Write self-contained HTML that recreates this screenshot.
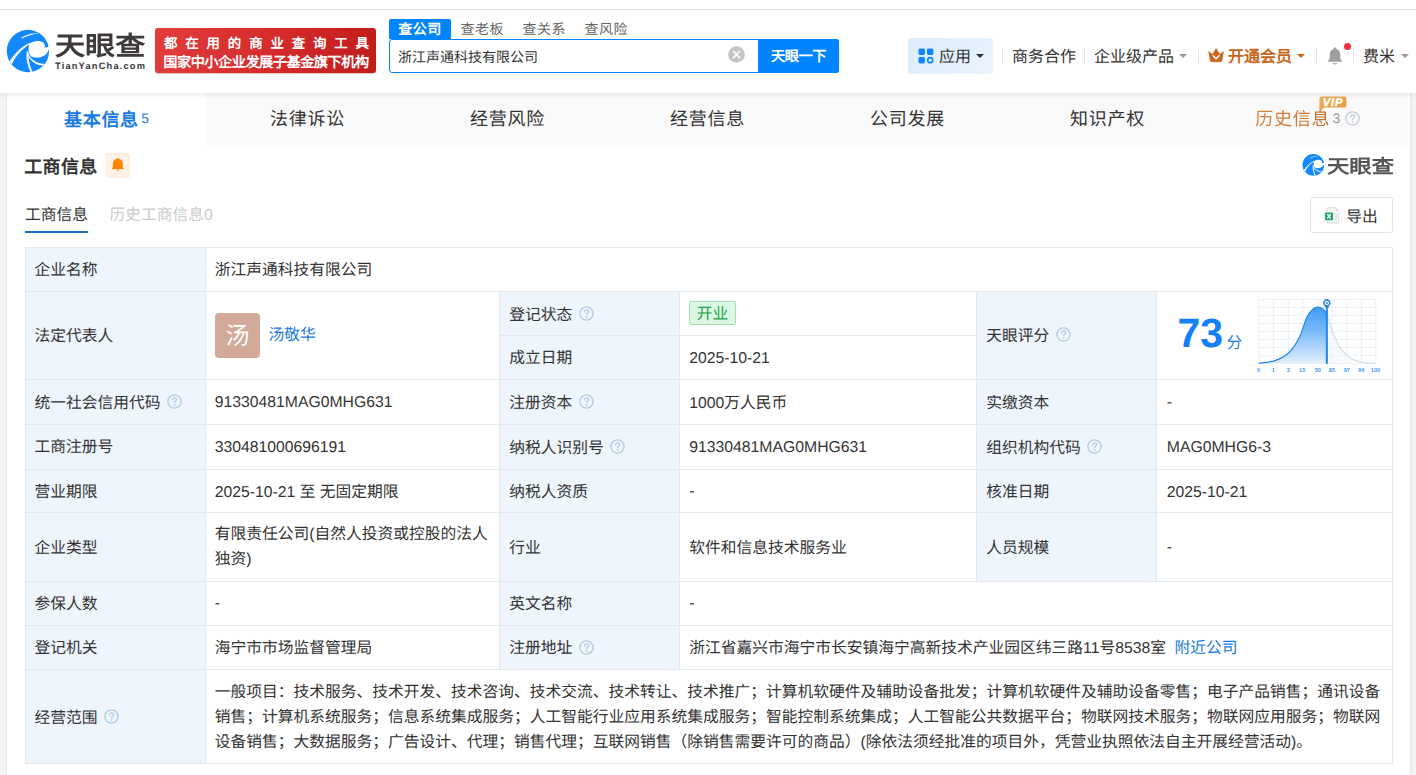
<!DOCTYPE html>
<html lang="zh-CN">
<head>
<meta charset="utf-8">
<title>天眼查</title>
<style>
html,body{margin:0;padding:0}
body{width:1416px;height:775px;overflow:hidden;background:#f4f4f4;font-family:"Liberation Sans",sans-serif;color:#333;position:relative;text-rendering:geometricPrecision}
div,span,a{box-sizing:border-box}
.a{position:absolute;white-space:nowrap}
/* header */
#hdr{left:0;top:0;width:1416px;height:93px;background:#fff;box-shadow:0 2px 5px rgba(0,0,0,.08);z-index:5}
#topline{left:0;top:9px;width:1416px;height:1px;background:#e2e2e2}
#logotxt{left:54.5px;top:28.5px;font-size:26.3px;font-weight:bold;line-height:34px;color:#3d3a39;transform:scaleX(1.145);transform-origin:0 0}
#logosub{left:55px;top:60px;font-size:9.3px;font-weight:bold;line-height:12px;color:#3d3a39;letter-spacing:1.17px}
#banner{left:155px;top:28px;width:221px;height:45px;border-radius:3px;background:linear-gradient(100deg,#e23d3d 0%,#d42a2a 55%,#c01c1c 100%);box-shadow:0 1px 1px rgba(120,0,0,.25)}
#ban1{left:9px;top:6.6px;font-size:13.4px;font-weight:bold;color:#fff;line-height:18px;letter-spacing:7.9px}
#ban2{left:8.3px;top:25.6px;font-size:14.2px;font-weight:bold;color:#fff;line-height:18px;letter-spacing:-0.5px}
.stab{top:19px;height:20px;line-height:21.5px;font-size:14px;color:#666;letter-spacing:0.5px}
#stab1{left:389px;width:62px;background:#0084ff;color:#fff;font-weight:bold;text-align:center;border-radius:2px 2px 0 0}
#sbox{left:389px;top:39px;width:450px;height:34px;border:1px solid #0084ff;border-radius:3px;background:#fff}
#stext{left:398px;top:46.5px;font-size:14px;line-height:20px;color:#333}
#sclear{left:728px;top:46px;width:17px;height:17px}
#sbtn{left:758px;top:39px;width:81px;height:34px;background:#0084ff;border-radius:0 3px 3px 0;color:#fff;font-size:14.2px;font-weight:bold;line-height:36px;text-align:center;letter-spacing:-0.4px}
.nav{top:46px;height:24px;line-height:24px;font-size:16px;color:#333}
.sep{top:49px;width:1px;height:14px;background:#e3e3e3}
.caret{top:54px;width:0;height:0;border-left:4px solid transparent;border-right:4px solid transparent;border-top:4.5px solid #999}
#appbox{left:908px;top:38px;width:85px;height:36px;border-radius:3px;background:linear-gradient(135deg,#dcebfb 0%,#e4f0fc 60%,#eef5fd 100%)}
/* content */
#content{left:6px;top:93px;width:1406px;height:690px;background:#fff;border-left:1px solid #ebebeb;border-right:2px solid #ececec}
#tabbar{left:206px;top:93px;width:1202px;height:53px;background:#f9f9f9}
.tab{top:105.4px;height:28px;line-height:28px;font-size:18px;color:#333;width:200px;text-align:center;letter-spacing:0.7px}

/* section */
#sec{left:24.3px;top:152.5px;font-size:18px;font-weight:bold;line-height:28px;color:#333;letter-spacing:0.3px}
#bellbox{left:106px;top:153px;width:23.6px;height:24.6px;border-radius:3px;background:#fff1e5;border:1px solid #fde9d8}
#wm{left:1326.8px;top:153.8px;font-size:19px;font-weight:bold;line-height:28px;color:#555;transform:scaleX(1.175);transform-origin:0 0}
.sub{top:203.8px;font-size:15.75px;line-height:24.8px}
#subline{left:25px;top:231px;width:63px;height:2px;background:#1f6fc6}
#exp{left:1310px;top:197px;width:83px;height:36px;border:1px solid #e2e3e8;border-radius:2.5px;background:#fff}
#exptxt{left:1346.2px;top:205.8px;font-size:15.75px;line-height:24.8px;color:#333}
/* table */
.lbg{background:#eef5fd}
.hl{height:1px;background:#e4e9ee;left:25px;width:1368px}
.vl{width:1px;background:#e4e9ee}
.c{font-size:15.76px;line-height:25.1px;color:#333;margin-top:2.3px}
.c0{left:34.6px}.c1{left:214.7px}.c2{left:509.2px}.c3{left:689.3px}.c4{left:986.3px}.c5{left:1166.8px}
.blue{color:#1b7ae0}
.q{width:15px;height:15px}
</style>
</head>
<body>
<div id="content" class="a"></div>
<div id="tabbar" class="a"></div>

<!-- header -->
<div id="hdr" class="a">
  <div id="topline" class="a"></div>
  <svg class="a" style="left:2px;top:26px" width="52" height="50" viewBox="0 0 806 775">
    <circle cx="402" cy="388" r="328" fill="#1489ff"/>
    <path d="M298 184 C360 138 470 108 580 112 C480 126 380 152 312 192 Z" fill="#fff"/>
    <path d="M425 275 C500 222 600 222 645 263 C668 288 668 315 657 336 L745 318 L745 384 L722 372 C705 440 620 495 540 490 C500 487 470 480 448 468 C425 440 405 400 412 350 C415 320 420 295 425 275 Z" fill="#fff"/>
    <path d="M434 260 C330 298 200 418 116 548 L150 592 C212 462 316 348 430 282 Z" fill="#fff"/>
    <path d="M384 392 C368 500 398 620 443 712 L470 704 C426 612 402 500 410 400 Z" fill="#fff"/>
    <path d="M408 425 C430 500 520 578 650 586 L640 613 C530 606 430 540 398 440 Z" fill="#fff"/>
  </svg>
  <div id="logotxt" class="a">天眼查</div>
  <div id="logosub" class="a">TianYanCha.com</div>
  <div id="banner" class="a">
    <div id="ban1" class="a">都在用的商业查询工具</div>
    <div id="ban2" class="a">国家中小企业发展子基金旗下机构</div>
  </div>

  <div id="stab1" class="a stab">查公司</div>
  <div class="a stab" style="left:460.5px">查老板</div>
  <div class="a stab" style="left:522.5px">查关系</div>
  <div class="a stab" style="left:584.5px">查风险</div>
  <div id="sbox" class="a"></div>
  <div id="stext" class="a">浙江声通科技有限公司</div>
  <svg id="sclear" class="a" viewBox="0 0 17 17"><circle cx="8.5" cy="8.5" r="8.3" fill="#c4c4c4"/><path d="M5.4 5.4 L11.6 11.6 M11.6 5.4 L5.4 11.6" stroke="#fff" stroke-width="1.5" stroke-linecap="round"/></svg>
  <div id="sbtn" class="a">天眼一下</div>

  <div id="appbox" class="a"></div>
  <svg class="a" style="left:918px;top:48px" width="16" height="16" viewBox="0 0 16 16">
    <rect x="0.5" y="0.5" width="6.4" height="6.4" rx="1.4" fill="#0f86ff"/>
    <rect x="9" y="0.5" width="6.4" height="6.4" rx="1.4" fill="#0f86ff"/>
    <rect x="0.5" y="9" width="6.4" height="6.4" rx="1.4" fill="#0f86ff"/>
    <circle cx="12.2" cy="12.2" r="2.5" fill="none" stroke="#0f86ff" stroke-width="1.7"/>
  </svg>
  <div class="a nav" style="left:939px">应用</div>
  <div class="a caret" style="left:976px;border-top-color:#333"></div>
  <div class="a sep" style="left:1002px"></div>
  <div class="a nav" style="left:1012px">商务合作</div>
  <div class="a sep" style="left:1084px"></div>
  <div class="a nav" style="left:1094px">企业级产品</div>
  <div class="a caret" style="left:1179px"></div>
  <div class="a sep" style="left:1198px"></div>
  <svg class="a" style="left:1207px;top:47px" width="17" height="17" viewBox="0 0 17 17">
    <path d="M1.7 4.5 L5.5 7.5 L9.1 1.4 L12.7 7.5 L16.5 4.5 L14.9 13.6 Q14.7 14.8 13.5 14.8 L4.7 14.8 Q3.5 14.8 3.3 13.6 Z" fill="#c9661c" stroke="#c9661c" stroke-width="0.6" stroke-linejoin="round"/>
    <path d="M6.2 8.8 L9.1 11.7 L12 8.8" fill="none" stroke="#fff" stroke-width="1.6" stroke-linecap="round" stroke-linejoin="round"/>
  </svg>
  <div class="a nav" style="left:1228px;font-weight:bold;color:#c9661c">开通会员</div>
  <div class="a caret" style="left:1297px;border-top-color:#c9661c"></div>
  <div class="a sep" style="left:1316px"></div>
  <svg class="a" style="left:1326px;top:46px" width="18" height="20" viewBox="0 0 18 20">
    <path d="M9 1.6 C9.9 1.6 10.4 2.2 10.4 3 C13 3.7 14.2 6 14.2 8.6 L14.2 12.6 L16 15 L16 15.8 L2 15.8 L2 15 L3.8 12.6 L3.8 8.6 C3.8 6 5 3.7 7.6 3 C7.6 2.2 8.1 1.6 9 1.6 Z" fill="#a0a0a0"/>
    <path d="M6.6 17.2 L11.4 17.2 L11.4 17.8 Q9 19.4 6.6 17.8 Z" fill="#a0a0a0"/>
  </svg>
  <div class="a" style="left:1344px;top:42.5px;width:7px;height:7px;border-radius:50%;background:#f5323c"></div>
  <div class="a sep" style="left:1353px"></div>
  <div class="a nav" style="left:1363px">费米</div>
  <div class="a caret" style="left:1401px"></div>
</div>

<!-- tabs -->
<div class="a tab" style="left:64px;top:106.2px;width:auto;text-align:left;font-weight:bold;color:#1b7ae0">基本信息</div>
<div class="a" style="left:141.3px;top:108.6px;font-size:13.8px;line-height:20px;color:#1b7ae0">5</div>
<div class="a tab" style="left:207.5px">法律诉讼</div>
<div class="a tab" style="left:407.5px">经营风险</div>
<div class="a tab" style="left:607.5px">经营信息</div>
<div class="a tab" style="left:807.5px">公司发展</div>
<div class="a tab" style="left:1007.5px">知识产权</div>
<div class="a tab" style="left:1255.3px;width:auto;text-align:left;color:#cc7832;background:linear-gradient(90deg,#d9863a,#c26a28);-webkit-background-clip:text;background-clip:text;-webkit-text-fill-color:transparent">历史信息</div>
<div class="a" style="left:1332.5px;top:107.8px;font-size:14px;line-height:20px;color:#999">3</div>
<svg class="a" style="left:1345px;top:111.1px" width="15" height="15" viewBox="0 0 15 15"><circle cx="7.5" cy="7.5" r="6.6" fill="none" stroke="#c3ccd4" stroke-width="1.3"/><path d="M5.5 6 C5.5 4.6 6.4 3.9 7.6 3.9 C8.8 3.9 9.6 4.6 9.6 5.6 C9.6 6.9 7.6 7 7.6 8.7" fill="none" stroke="#c3ccd4" stroke-width="1.2" stroke-linecap="round"/><circle cx="7.6" cy="10.9" r="0.85" fill="#c3ccd4"/></svg>
<svg class="a" style="left:1319px;top:96px" width="28" height="17" viewBox="0 0 28 17">
  <defs><linearGradient id="vg" x1="0" y1="0" x2="1" y2="1"><stop offset="0" stop-color="#f0b35e"/><stop offset="1" stop-color="#e0943a"/></linearGradient></defs>
  <path d="M2.6 0.4 L25.4 0.4 Q27.4 0.4 27.4 2.4 L27.4 9.4 Q27.4 11.4 25.4 11.4 L5.2 11.4 L0.4 16 L0.4 2.6 Q0.4 0.4 2.6 0.4 Z" fill="url(#vg)"/>
  <text x="14" y="9.7" font-family="Liberation Sans, sans-serif" font-size="11" font-weight="bold" font-style="italic" fill="#fff" stroke="#fff" stroke-width="0.45" text-anchor="middle" letter-spacing="0.9">VIP</text>
</svg>


<!-- section -->
<div id="sec" class="a">工商信息</div>
<div id="bellbox" class="a"></div>
<svg class="a" style="left:111px;top:157px" width="14" height="15" viewBox="0 0 14 15">
  <path d="M6.8 0.9 C7.3 0.9 7.7 1.2 7.8 1.7 C10.3 2.3 11.8 4.3 11.8 7 L11.8 10.6 L12.7 11 L12.7 12 L0.9 12 L0.9 11 L1.8 10.6 L1.8 7 C1.8 4.3 3.3 2.3 5.8 1.7 C5.9 1.2 6.3 0.9 6.8 0.9 Z" fill="#ff8503"/>
  <path d="M5 12.4 L8.6 12.4 Q6.8 14.9 5 12.4 Z" fill="#ff8503"/>
</svg>
<svg class="a" style="left:1300.3px;top:152.4px" width="26.78" height="25.75" viewBox="0 0 806 775">
  <circle cx="402" cy="388" r="328" fill="#1489ff"/>
    <path d="M298 184 C360 138 470 108 580 112 C480 126 380 152 312 192 Z" fill="#fff"/>
    <path d="M425 275 C500 222 600 222 645 263 C668 288 668 315 657 336 L745 318 L745 384 L722 372 C705 440 620 495 540 490 C500 487 470 480 448 468 C425 440 405 400 412 350 C415 320 420 295 425 275 Z" fill="#fff"/>
    <path d="M434 260 C330 298 200 418 116 548 L150 592 C212 462 316 348 430 282 Z" fill="#fff"/>
    <path d="M384 392 C368 500 398 620 443 712 L470 704 C426 612 402 500 410 400 Z" fill="#fff"/>
    <path d="M408 425 C430 500 520 578 650 586 L640 613 C530 606 430 540 398 440 Z" fill="#fff"/>
</svg>
<div id="wm" class="a">天眼查</div>
<div class="a sub" style="left:25px;color:#333">工商信息</div>
<div id="subline" class="a"></div>
<div class="a sub" style="left:109.5px;color:#ccc">历史工商信息0</div>
<div id="exp" class="a"></div>
<svg class="a" style="left:1324px;top:206.5px" width="16" height="17" viewBox="0 0 16 17">
  <path d="M3.6 0.8 L11.4 0.8 L14.8 4.2 L14.8 15.4 Q14.8 16 14.2 16 L3.6 16 Q3 16 3 15.4 L3 1.4 Q3 0.8 3.6 0.8 Z" fill="#f7f7f8" stroke="#d4d5da" stroke-width="0.9"/>
  <path d="M11.4 0.8 L11.4 4.2 L14.8 4.2 Z" fill="#dcdde1"/>
  <path d="M10.6 7.6 H13 M10.6 9.7 H13 M10.6 11.8 H13" stroke="#d2d3d8" stroke-width="1"/>
  <rect x="0.9" y="5.4" width="8.2" height="7.8" rx="0.8" fill="#2aa869"/>
  <path d="M3.3 7.2 L6.7 11.4 M6.7 7.2 L3.3 11.4" stroke="#fff" stroke-width="1.3"/>
</svg>
<div id="exptxt" class="a">导出</div>

<!-- table -->
<div class="a lbg" style="left:25px;top:247px;width:180px;height:516px"></div>
<div class="a lbg" style="left:499px;top:291px;width:180px;height:378px"></div>
<div class="a lbg" style="left:976px;top:291px;width:180px;height:290px"></div>
<div class="a hl" style="top:247px"></div>
<div class="a hl" style="top:291px"></div>
<div class="a hl" style="top:379px"></div>
<div class="a hl" style="top:424px"></div>
<div class="a hl" style="top:469px"></div>
<div class="a hl" style="top:512px"></div>
<div class="a hl" style="top:581px"></div>
<div class="a hl" style="top:625px"></div>
<div class="a hl" style="top:669px"></div>
<div class="a hl" style="top:763px"></div>
<div class="a hl" style="top:335px;left:499px;width:478px"></div>
<div class="a vl" style="left:25px;top:247px;height:517px"></div>
<div class="a vl" style="left:205px;top:247px;height:517px"></div>
<div class="a vl" style="left:1392px;top:247px;height:517px"></div>
<div class="a vl" style="left:499px;top:291px;height:379px"></div>
<div class="a vl" style="left:679px;top:291px;height:379px"></div>
<div class="a vl" style="left:976px;top:291px;height:291px"></div>
<div class="a vl" style="left:1156px;top:291px;height:291px"></div>
<div class="a c c0" style="top:256.1px">企业名称</div>
<div class="a c c1" style="top:256.1px">浙江声通科技有限公司</div>
<div class="a c c0" style="top:322.2px">法定代表人</div>
<div class="a" style="left:215px;top:313px;width:45px;height:45px;border-radius:4px;background:#d3a999;color:#fff;font-size:24px;line-height:47px;text-align:center">汤</div>
<div class="a c blue" style="left:268.5px;top:321.2px">汤敬华</div>
<div class="a c c2" style="top:300.8px">登记状态</div>
<svg class="a q" style="left:578.5px;top:305.9px" viewBox="0 0 15 15"><circle cx="7.5" cy="7.5" r="6.6" fill="none" stroke="#b4cbe3" stroke-width="1.4"/><path d="M5.5 6 C5.5 4.6 6.4 3.9 7.6 3.9 C8.8 3.9 9.6 4.6 9.6 5.6 C9.6 6.9 7.6 7 7.6 8.7" fill="none" stroke="#b4cbe3" stroke-width="1.3" stroke-linecap="round"/><circle cx="7.6" cy="10.9" r="0.85" fill="#b4cbe3"/></svg>
<div class="a" style="left:689px;top:301px;width:47px;height:23.5px;border-radius:2px;background:#dbf7e3;border:1px solid #a3e0b5;color:#1fa24b;font-size:15.75px;line-height:25px;text-align:center">开业</div>
<div class="a c c2" style="top:343.3px">成立日期</div>
<div class="a c c3" style="top:343.3px">2025-10-21</div>
<div class="a c c4" style="top:322.2px">天眼评分</div>
<svg class="a q" style="left:1055.5px;top:327.1px" viewBox="0 0 15 15"><circle cx="7.5" cy="7.5" r="6.6" fill="none" stroke="#b4cbe3" stroke-width="1.4"/><path d="M5.5 6 C5.5 4.6 6.4 3.9 7.6 3.9 C8.8 3.9 9.6 4.6 9.6 5.6 C9.6 6.9 7.6 7 7.6 8.7" fill="none" stroke="#b4cbe3" stroke-width="1.3" stroke-linecap="round"/><circle cx="7.6" cy="10.9" r="0.85" fill="#b4cbe3"/></svg>
<div class="a" style="left:1177.6px;top:309.2px;font-size:41px;font-weight:bold;line-height:48px;color:#1380f5;letter-spacing:-0.2px">73</div>
<div class="a c blue" style="left:1226.4px;top:328.9px">分</div>
<svg class="a" style="left:1250px;top:292px" width="140" height="88" viewBox="0 0 1233 775">
  <defs>
    <linearGradient id="bg1" x1="0" y1="133" x2="0" y2="630" gradientUnits="userSpaceOnUse"><stop offset="0" stop-color="#3d9bf7"/><stop offset="0.45" stop-color="#7dbcfa"/><stop offset="1" stop-color="#e4f0fc"/></linearGradient>
  </defs>
  <path d="M78 65V630M207 65V630M337 65V630M465 65V630M597 65V630M725 65V630M853 65V630M982 65V630M1108 65V630M78 65H1108M78 135H1108M78 207H1108M78 277H1108M78 348H1108M78 418H1108M78 489H1108M78 560H1108M78 630H1108" fill="none" stroke="#e7eef8" stroke-width="8"/>
  <path d="M677 197 C690 230 705 290 725 345 C750 410 780 470 800 500 C830 540 880 585 920 600 C960 614 1040 628 1108 630 L677 630 Z" fill="#f3f5f8" fill-opacity="0.6"/>
  <path d="M677 197 C690 230 705 290 725 345 C750 410 780 470 800 500 C830 540 880 585 920 600 C960 614 1040 628 1108 630" fill="none" stroke="#ccd6e0" stroke-width="9"/>
  <path d="M78 628 C140 622 170 616 207 608 C260 594 300 572 337 540 C370 510 410 450 440 390 C460 345 480 270 500 225 C520 185 550 135 597 133 C630 133 660 160 677 197 L677 630 L78 630 Z" fill="url(#bg1)"/>
  <path d="M78 628 C140 622 170 616 207 608 C260 594 300 572 337 540 C370 510 410 450 440 390 C460 345 480 270 500 225 C520 185 550 135 597 133 C630 133 660 160 677 197" fill="none" stroke="#2587ee" stroke-width="11"/>
  <path d="M677 150V632" stroke="#2587ee" stroke-width="18"/>
  <path d="M677 160 L653 117 A32 32 0 1 1 701 117 Z" fill="#2587ee"/>
  <circle cx="677" cy="97" r="19" fill="#fff"/>
  <circle cx="677" cy="97" r="9" fill="#2587ee"/>
  <g font-family="Liberation Sans, sans-serif" font-size="50" font-weight="bold" fill="#4a9ceb" text-anchor="middle"><text x="75" y="702">0</text><text x="205" y="702">1</text><text x="337" y="702">3</text><text x="460" y="702">15</text><text x="597" y="702">50</text><text x="722" y="702">85</text><text x="853" y="702">97</text><text x="980" y="702">99</text><text x="1105" y="702">100</text></g>
</svg>
<div class="a c c0" style="top:388.9px">统一社会信用代码</div>
<svg class="a q" style="left:167.1px;top:393.9px" viewBox="0 0 15 15"><circle cx="7.5" cy="7.5" r="6.6" fill="none" stroke="#b4cbe3" stroke-width="1.4"/><path d="M5.5 6 C5.5 4.6 6.4 3.9 7.6 3.9 C8.8 3.9 9.6 4.6 9.6 5.6 C9.6 6.9 7.6 7 7.6 8.7" fill="none" stroke="#b4cbe3" stroke-width="1.3" stroke-linecap="round"/><circle cx="7.6" cy="10.9" r="0.85" fill="#b4cbe3"/></svg>
<div class="a c c1" style="top:388.1px">91330481MAG0MHG631</div>
<div class="a c c2" style="top:388.9px">注册资本</div>
<svg class="a q" style="left:578.5px;top:393.9px" viewBox="0 0 15 15"><circle cx="7.5" cy="7.5" r="6.6" fill="none" stroke="#b4cbe3" stroke-width="1.4"/><path d="M5.5 6 C5.5 4.6 6.4 3.9 7.6 3.9 C8.8 3.9 9.6 4.6 9.6 5.6 C9.6 6.9 7.6 7 7.6 8.7" fill="none" stroke="#b4cbe3" stroke-width="1.3" stroke-linecap="round"/><circle cx="7.6" cy="10.9" r="0.85" fill="#b4cbe3"/></svg>
<div class="a c c3" style="top:388.9px">1000万人民币</div>
<div class="a c c4" style="top:388.9px">实缴资本</div>
<div class="a c c5" style="top:388px">-</div>
<div class="a c c0" style="top:433.1px">工商注册号</div>
<div class="a c c1" style="top:432.6px">330481000696191</div>
<div class="a c c2" style="top:433.6px">纳税人识别号</div>
<svg class="a q" style="left:610.2px;top:438.7px" viewBox="0 0 15 15"><circle cx="7.5" cy="7.5" r="6.6" fill="none" stroke="#b4cbe3" stroke-width="1.4"/><path d="M5.5 6 C5.5 4.6 6.4 3.9 7.6 3.9 C8.8 3.9 9.6 4.6 9.6 5.6 C9.6 6.9 7.6 7 7.6 8.7" fill="none" stroke="#b4cbe3" stroke-width="1.3" stroke-linecap="round"/><circle cx="7.6" cy="10.9" r="0.85" fill="#b4cbe3"/></svg>
<div class="a c c3" style="top:432.6px">91330481MAG0MHG631</div>
<div class="a c c4" style="top:433.6px">组织机构代码</div>
<svg class="a q" style="left:1087.0px;top:438.7px" viewBox="0 0 15 15"><circle cx="7.5" cy="7.5" r="6.6" fill="none" stroke="#b4cbe3" stroke-width="1.4"/><path d="M5.5 6 C5.5 4.6 6.4 3.9 7.6 3.9 C8.8 3.9 9.6 4.6 9.6 5.6 C9.6 6.9 7.6 7 7.6 8.7" fill="none" stroke="#b4cbe3" stroke-width="1.3" stroke-linecap="round"/><circle cx="7.6" cy="10.9" r="0.85" fill="#b4cbe3"/></svg>
<div class="a c c5" style="top:432.6px">MAG0MHG6-3</div>
<div class="a c c0" style="top:477.8px">营业期限</div>
<div class="a c c1" style="top:477.8px">2025-10-21 至 无固定期限</div>
<div class="a c c2" style="top:477.8px">纳税人资质</div>
<div class="a c c3" style="top:477px">-</div>
<div class="a c c4" style="top:477.8px">核准日期</div>
<div class="a c c5" style="top:477.8px">2025-10-21</div>
<div class="a c c0" style="top:533.9px">企业类型</div>
<div class="a c c1" style="top:519.9px">有限责任公司(自然人投资或控股的法人<br>独资)</div>
<div class="a c c2" style="top:533.9px">行业</div>
<div class="a c c3" style="top:533.9px">软件和信息技术服务业</div>
<div class="a c c4" style="top:533.9px">人员规模</div>
<div class="a c c5" style="top:533px">-</div>
<div class="a c c0" style="top:590px">参保人数</div>
<div class="a c c1" style="top:589px">-</div>
<div class="a c c2" style="top:590px">英文名称</div>
<div class="a c c3" style="top:589px">-</div>
<div class="a c c0" style="top:634px">登记机关</div>
<div class="a c c1" style="top:634px">海宁市市场监督管理局</div>
<div class="a c c2" style="top:634px">注册地址</div>
<svg class="a q" style="left:578.5px;top:639.7px" viewBox="0 0 15 15"><circle cx="7.5" cy="7.5" r="6.6" fill="none" stroke="#b4cbe3" stroke-width="1.4"/><path d="M5.5 6 C5.5 4.6 6.4 3.9 7.6 3.9 C8.8 3.9 9.6 4.6 9.6 5.6 C9.6 6.9 7.6 7 7.6 8.7" fill="none" stroke="#b4cbe3" stroke-width="1.3" stroke-linecap="round"/><circle cx="7.6" cy="10.9" r="0.85" fill="#b4cbe3"/></svg>
<div class="a c c3" style="top:634px">浙江省嘉兴市海宁市长安镇海宁高新技术产业园区纬三路11号8538室<span class="blue" style="margin-left:8.5px">附近公司</span></div>
<div class="a c c0" style="top:703.6px">经营范围</div>
<svg class="a q" style="left:104.0px;top:708.7px" viewBox="0 0 15 15"><circle cx="7.5" cy="7.5" r="6.6" fill="none" stroke="#b4cbe3" stroke-width="1.4"/><path d="M5.5 6 C5.5 4.6 6.4 3.9 7.6 3.9 C8.8 3.9 9.6 4.6 9.6 5.6 C9.6 6.9 7.6 7 7.6 8.7" fill="none" stroke="#b4cbe3" stroke-width="1.3" stroke-linecap="round"/><circle cx="7.6" cy="10.9" r="0.85" fill="#b4cbe3"/></svg>
<div class="a c c1" style="top:677.6px">一般项目：技术服务、技术开发、技术咨询、技术交流、技术转让、技术推广；计算机软硬件及辅助设备批发；计算机软硬件及辅助设备零售；电子产品销售；通讯设备<br>销售；计算机系统服务；信息系统集成服务；人工智能行业应用系统集成服务；智能控制系统集成；人工智能公共数据平台；物联网技术服务；物联网应用服务；物联网<br>设备销售；大数据服务；广告设计、代理；销售代理；互联网销售（除销售需要许可的商品）(除依法须经批准的项目外，凭营业执照依法自主开展经营活动)。</div>
</body>
</html>
